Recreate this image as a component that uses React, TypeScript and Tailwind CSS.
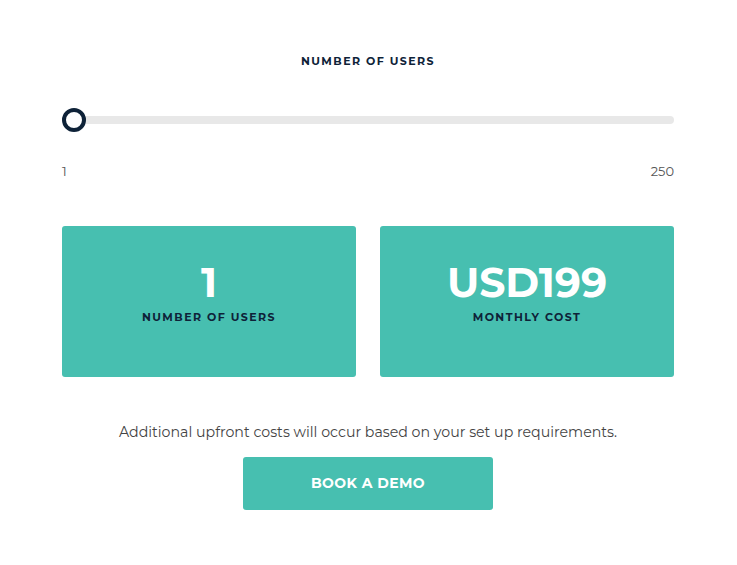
import { useState } from "react";

const font = { fontFamily: '"Montserrat", "Open Sans", "Liberation Sans", sans-serif' };

function StatCard({ value, label }: { value: string; label: string }) {
  return (
    <div className="flex h-[151px] flex-col items-center justify-center rounded-[3px] bg-[#47bfb0] pb-[16px]">
      <div className="text-[41px] font-bold leading-none text-white">{value}</div>
      <div className="mt-[6px] text-[11px] font-bold tracking-[0.13em] text-[#0e2238]">{label}</div>
    </div>
  );
}

export default function App() {
  const [users] = useState(1);

  return (
    <div className="min-h-screen bg-white" style={font}>
      <div className="ml-[62px] w-[612px] pt-[53px]">
        <h2 className="text-center text-[11px] font-bold tracking-[0.13em] text-[#0e2238]">NUMBER OF USERS</h2>

        <div className="relative mt-[46px] h-[8px] rounded-full bg-[#e8e8e8]">
          <div className="absolute left-0 top-1/2 h-[24px] w-[24px] -translate-y-1/2 rounded-full border-[4px] border-[#0e2238] bg-white" />
        </div>

        <div className="mt-[38px] flex justify-between text-[13px] text-[#555]">
          <span>1</span>
          <span>250</span>
        </div>

        <div className="mt-[45px] grid grid-cols-2 gap-[24px]">
          <StatCard value={String(users)} label="NUMBER OF USERS" />
          <StatCard value="USD199" label="MONTHLY COST" />
        </div>

        <p className="mt-[45px] text-center text-[14.2px] text-[#444]">
          Additional upfront costs will occur based on your set up requirements.
        </p>

        <div className="mt-[14px] flex justify-center">
          <button className="h-[53px] w-[250px] rounded-[3px] bg-[#47bfb0] text-[14px] font-bold tracking-[0.03em] text-white">
            BOOK A DEMO
          </button>
        </div>
      </div>
    </div>
  );
}
